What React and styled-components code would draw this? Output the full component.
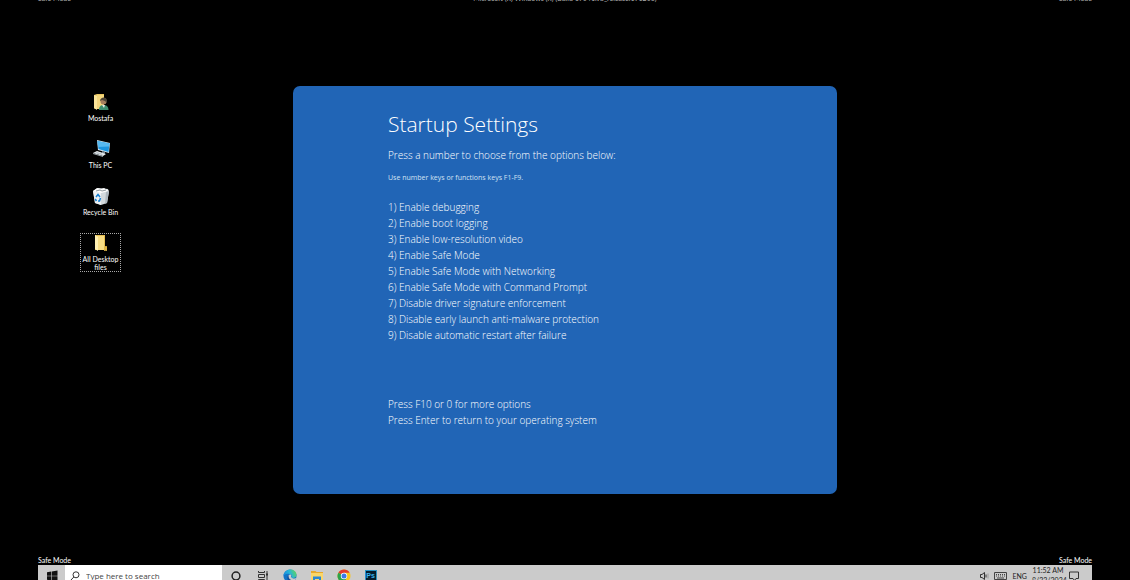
import React, { useState } from 'react';
import styled, { createGlobalStyle } from 'styled-components';

const GlobalStyle = createGlobalStyle`
  * {
    box-sizing: border-box;
  }
  body {
    margin: 0;
    background: #000;
    font-family: 'Open Sans', 'Noto Sans', sans-serif;
  }
`;

const Screen = styled.div`
  height: 100vh;
  overflow: hidden;
  display: flex;
  align-items: center;
  padding: 0 38px;
  background: #000;
`;
const Desktop = styled.div`
  flex: 1;
  height: calc(100vh + 14px);
  flex-shrink: 0;
  display: flex;
  flex-direction: column;
`;
const Watermarks = styled.div`
  display: flex;
  justify-content: space-between;
  align-items: center;
  height: 10px;
  font-family: Lato, 'Open Sans', sans-serif;
  font-size: 7px;
  line-height: 12px;
  color: ${(props) => (props.$dim ? '#b4b4b4' : '#fff')};
`;
const Workspace = styled.main`
  flex: 1;
  display: grid;
  grid-template-columns: 1fr minmax(0, 544px) 1fr;
  padding: 83px 0 0;
`;
const Icons = styled.nav`
  display: flex;
  flex-direction: column;
  align-items: flex-start;
  gap: 8px;
  padding: 6px 42px;
`;
const DesktopIcon = styled.button`
  width: 41px;
  min-height: 39px;
  padding: 0;
  display: flex;
  flex-direction: column;
  align-items: center;
  gap: 3px;
  font-family: Lato, 'Open Sans', sans-serif;
  font-size: 7px;
  line-height: 8px;
  color: #fff;
  background: none;
  border: 1px dotted ${(props) => (props.$selected ? '#a8a8a8' : 'transparent')};

  & svg {
    flex: none;
    height: 18px;
    width: 18px;
  }
`;
const Panel = styled.section`
  align-self: start;
  padding: 23px 20px 66px 95px;
  color: #fff;
  background: #2165b6;
  border-radius: 7px;
  font-size: 10px;
  font-weight: 300;
  line-height: 16px;
`;
const Title = styled.h1`
  margin: 0;
  font-size: 21px;
  font-weight: 300;
  line-height: 30px;
`;
const Lead = styled.p`
  margin: 8px 0 7px;
`;
const Hint = styled.p`
  margin: 0;
  font-size: 7px;
  font-weight: 400;
  color: #d3e2f3;
`;
const Options = styled.ol`
  margin: 13px 0 53px;
  padding: 0;
  list-style: none;
`;
const Footer = styled.p`
  margin: 0;
`;

const Taskbar = styled.footer`
  display: flex;
  height: 22px;
  background: #cbcbcb;
  color: #222;
`;
const TaskButton = styled.button`
  width: 27px;
  padding: 0;
  display: grid;
  place-items: center;
  background: none;
  border: none;

  & svg {
    height: ${(props) => props.$size || 12}px;
    width: ${(props) => props.$size || 12}px;
  }
`;
const Search = styled.label`
  width: 157px;
  display: flex;
  align-items: center;
  gap: 6px;
  padding: 0 5px;
  background: #fff;

  & svg {
    height: 10px;
    width: 10px;
    flex: none;
  }
`;
const SearchInput = styled.input`
  flex: 1;
  min-width: 0;
  padding: 0 0 2px;
  border: none;
  outline: none;
  background: none;
  font-family: inherit;
  font-size: 8px;

  &::placeholder {
    color: #444;
    opacity: 1;
  }
`;
const Apps = styled.div`
  display: flex;
`;
const Tray = styled.div`
  display: flex;
  align-items: center;
  gap: 5px;
  margin-left: auto;
  padding-right: 13px;
  font-family: Lato, 'Open Sans', sans-serif;
  font-size: 7px;

  & svg {
    display: block;
  }
`;
const Clock = styled.time`
  width: 32px;
  text-align: center;
  line-height: 10px;
  padding-bottom: 2px;
  white-space: nowrap;
`;

function UserFolderIcon() {
  return (
    <svg viewBox="0 0 18 18">
      <path d="M2 2l3-1h7v15H3l-1-1z" fill="#e9c660" />
      <path d="M2 2l3 1v14l-3-2z" fill="#fbe59a" />
      <path d="M5 2h7v14H5z" fill="#f4d67c" />
      <path d="M7 17c0-4 2-5 4.500-5s5 1 5 5z" fill="#3f8f70" />
      <path d="M10 12l2 3 1-3z" fill="#e6e9e4" />
      <circle cx="11.500" cy="8.500" r="3" fill="#a8805f" />
      <path d="M8 8c0-4 6-5 7-1v3l-2-2-3-1z" fill="#4c4337" />
    </svg>
  );
}

function ComputerIcon() {
  return (
    <svg viewBox="0 0 18 18">
      <path d="M5 0l13 3-1 10-11-3z" fill="#d6e6ef" />
      <path d="M5.500 1l12 2.500-1 8.500-10-3z" fill="#1c95df" />
      <path d="M5.500 1l12 2.500-.5 3L6 7z" fill="#56b9f0" />
      <path d="M10 11l3 1v2l-3-1z" fill="#7c8b94" />
      <path d="M1 13l4-2 9 3-3 2z" fill="#edf1f3" />
      <path d="M1 13l10 3v1L1 14z" fill="#9ba5ab" />
      <path d="M3 13l2-1 6 2-1 1z" fill="#b9c2c8" />
    </svg>
  );
}

function RecycleIcon() {
  return (
    <svg viewBox="0 0 18 18">
      <path d="M1 4l5-3 10 1 1 3-2 11-6 2-6-2z" fill="#d3dade" />
      <path d="M1 4l8 2v12l-6-2z" fill="#eef1f3" />
      <path d="M1 4l4-3 4 1 3-1 5 3-8 2z" fill="#fff" />
      <path d="M4 4l4-1 2 1 4-1" fill="none" stroke="#8f9aa0" />
      <path d="M14 5l3-1-2 12-2 .7z" fill="#aeb8bf" />
      <path d="M4 10l2-2.500L8 10M8.500 11l-1 3H6M4.500 14L3.200 12" fill="none" stroke="#1680d4" strokeWidth="1.500" />
    </svg>
  );
}

function FolderIcon() {
  return (
    <svg viewBox="0 0 18 18">
      <path d="M3 1h10v11l2 1v4l-3-1H3z" fill="#e5bd50" />
      <path d="M5 2h7v14H5z" fill="#f7dc83" />
      <path d="M3 1l3 2v14l-3-2z" fill="#fff0b2" />
      <path d="M12 13l3-1v4l-3 1z" fill="#ddb342" />
    </svg>
  );
}

function WindowsIcon() {
  return (
    <svg viewBox="0 0 12 12" fill="#111">
      <path d="M1 2.200l4.300-.7v4.200H1zM5.900 1.400L11.500.5v5.200H5.900zM1 6.300h4.300v4.200L1 9.800zM5.900 6.300h5.600v5.200l-5.600-.9z" />
    </svg>
  );
}

function SearchIcon() {
  return (
    <svg viewBox="0 0 10 10" fill="none" stroke="#333">
      <circle cx="6" cy="3.800" r="3" />
      <path d="M3.800 6L.6 9.400" />
    </svg>
  );
}

function CortanaIcon() {
  return (
    <svg viewBox="0 0 12 12" fill="none" stroke="#222" strokeWidth="1.500">
      <circle cx="6" cy="6" r="3.900" />
    </svg>
  );
}

function TaskViewIcon() {
  return (
    <svg viewBox="0 0 10 10" fill="none" stroke="#333">
      <path d="M.5 0v1.500h6V0M.5 10V8.500h6V10M.5 3.500h6v3h-6zM9 0v10" />
      <path d="M8 3.500h2" strokeWidth="2" />
    </svg>
  );
}

function EdgeIcon() {
  return (
    <svg viewBox="0 0 14 14">
      <defs>
        <linearGradient id="edge-top" x1="0" x2="1" y1=".6" y2=".3">
          <stop offset="0" stopColor="#1689dc" />
          <stop offset=".5" stopColor="#27b6d8" />
          <stop offset="1" stopColor="#62d55a" />
        </linearGradient>
      </defs>
      <circle cx="7" cy="7" r="6.500" fill="#1273c6" />
      <path d="M.5 7C.8-1.500 13.500-1.500 13.500 6c0 3-4 3.500-5.200 2.300C10 6 7.500 4.500 5 4.800 2.500 5 1 6 .5 7z" fill="url(#edge-top)" />
      <path d="M8.300 8.300c-.8-.7.500-1-.1-2.200-1-1.300-3.300.1-3.300 2.400 0 2.600 3.500 4.200 7 2.600l1.500-2c-1.800.8-4.200.4-5.100-.8z" fill="#cbcbcb" />
      <path d="M5.600 6.200c-2.500 2-1 6.200 2.200 7.200 2 0 3.600-1 4.500-2.500-3.600 1.500-7.300-.6-6.700-4.700z" fill="#104c9a" />
    </svg>
  );
}

function ExplorerIcon() {
  return (
    <svg viewBox="0 0 12 12">
      <path d="M0 1h4.500l1 1H12v9H0z" fill="#e8a92c" />
      <path d="M0 3h12v8H0z" fill="#fbd667" />
      <path d="M2 6.500h8V12H8V9H4v3H2z" fill="#2c88d3" />
    </svg>
  );
}

function ChromeIcon() {
  return (
    <svg viewBox="0 0 14 14">
      <circle cx="7" cy="7" r="6.500" fill="#f8c51c" />
      <path d="M7 7L1.400 3.700A6.500 6.500 0 0 1 12.600 3.700H7z" fill="#e33b2e" />
      <path d="M1.400 3.700A6.500 6.500 0 0 0 7 13.500L9.800 8.600 7 7z" fill="#2ca24c" />
      <circle cx="7" cy="7" r="3.200" fill="#fff" />
      <circle cx="7" cy="7" r="2.500" fill="#3979e8" />
    </svg>
  );
}

const PsBadge = styled.span`
  height: 12px;
  width: 12px;
  border: 1px solid #2793c4;
  background: #041c2c;
  color: #35b4ee;
  font-size: 7px;
  font-weight: 700;
  line-height: 9px;
  text-align: center;
`;

const DESKTOP_ICONS = [
  { label: 'Mostafa', icon: <UserFolderIcon /> },
  { label: 'This PC', icon: <ComputerIcon /> },
  { label: 'Recycle Bin', icon: <RecycleIcon /> },
  { label: 'All Desktop files', icon: <FolderIcon /> },
];

const OPTIONS = [
  'Enable debugging',
  'Enable boot logging',
  'Enable low-resolution video',
  'Enable Safe Mode',
  'Enable Safe Mode with Networking',
  'Enable Safe Mode with Command Prompt',
  'Disable driver signature enforcement',
  'Disable early launch anti-malware protection',
  'Disable automatic restart after failure',
];

const APPS = [
  { name: 'Cortana', icon: <CortanaIcon /> },
  { name: 'Task View', icon: <TaskViewIcon />, size: 10 },
  { name: 'Edge', icon: <EdgeIcon />, size: 14 },
  { name: 'File Explorer', icon: <ExplorerIcon /> },
  { name: 'Chrome', icon: <ChromeIcon />, size: 14 },
  { name: 'Photoshop', icon: <PsBadge>Ps</PsBadge> },
];

function StartupSettings() {
  return (
    <Panel>
      <Title>Startup Settings</Title>
      <Lead>Press a number to choose from the options below:</Lead>
      <Hint>Use number keys or functions keys F1-F9.</Hint>
      <Options>
        {OPTIONS.map((option, index) => (
          <li key={option}>
            {index + 1}) {option}
          </li>
        ))}
      </Options>
      <Footer>Press F10 or 0 for more options</Footer>
      <Footer>Press Enter to return to your operating system</Footer>
    </Panel>
  );
}

function SystemTray() {
  return (
    <Tray>
      <svg width="9" height="10" viewBox="0 0 9 10" fill="none" stroke="#333">
        <path d="M.5 3.500h1.500l2.500-2v7l-2.500-2H.5z" />
        <path d="M6 3.500v3" />
        <path d="M8 2.500v5" stroke="#999" />
      </svg>
      <svg width="13" height="8" viewBox="0 0 13 8" fill="none" stroke="#444">
        <path d="M.5.5h12v7H.5z" />
        <path d="M2 2.500h9M2 4h9" strokeDasharray="1 1" />
        <path d="M3 6h7" />
      </svg>
      <span>ENG</span>
      <Clock>
        11:52 AM
        <br />
        8/22/2024
      </Clock>
      <svg width="10" height="10" viewBox="0 0 10 10" fill="none" stroke="#333">
        <path d="M.5 1h9v6.500H7l-1.500 2-1.500-2H.5z" />
      </svg>
    </Tray>
  );
}

function App() {
  const [selected, setSelected] = useState('All Desktop files');

  return (
    <Screen>
      <GlobalStyle />
      <Desktop>
        <Watermarks $dim>
          <span>Safe Mode</span>
          <span>Microsoft (R) Windows (R) (Build 19041.vb_release.191206)</span>
          <span>Safe Mode</span>
        </Watermarks>
        <Workspace>
          <Icons>
            {DESKTOP_ICONS.map(({ label, icon }) => (
              <DesktopIcon
                key={label}
                $selected={label === selected}
                onClick={() => setSelected(label)}
              >
                {icon}
                {label}
              </DesktopIcon>
            ))}
          </Icons>
          <StartupSettings />
        </Workspace>
        <Watermarks>
          <span>Safe Mode</span>
          <span>Safe Mode</span>
        </Watermarks>
        <Taskbar>
          <TaskButton aria-label="Start">
            <WindowsIcon />
          </TaskButton>
          <Search>
            <SearchIcon />
            <SearchInput type="text" aria-label="Search" placeholder="Type here to search" />
          </Search>
          <Apps>
            {APPS.map(({ name, icon, size }) => (
              <TaskButton key={name} aria-label={name} $size={size}>
                {icon}
              </TaskButton>
            ))}
          </Apps>
          <SystemTray />
        </Taskbar>
      </Desktop>
    </Screen>
  );
}

export default App;
